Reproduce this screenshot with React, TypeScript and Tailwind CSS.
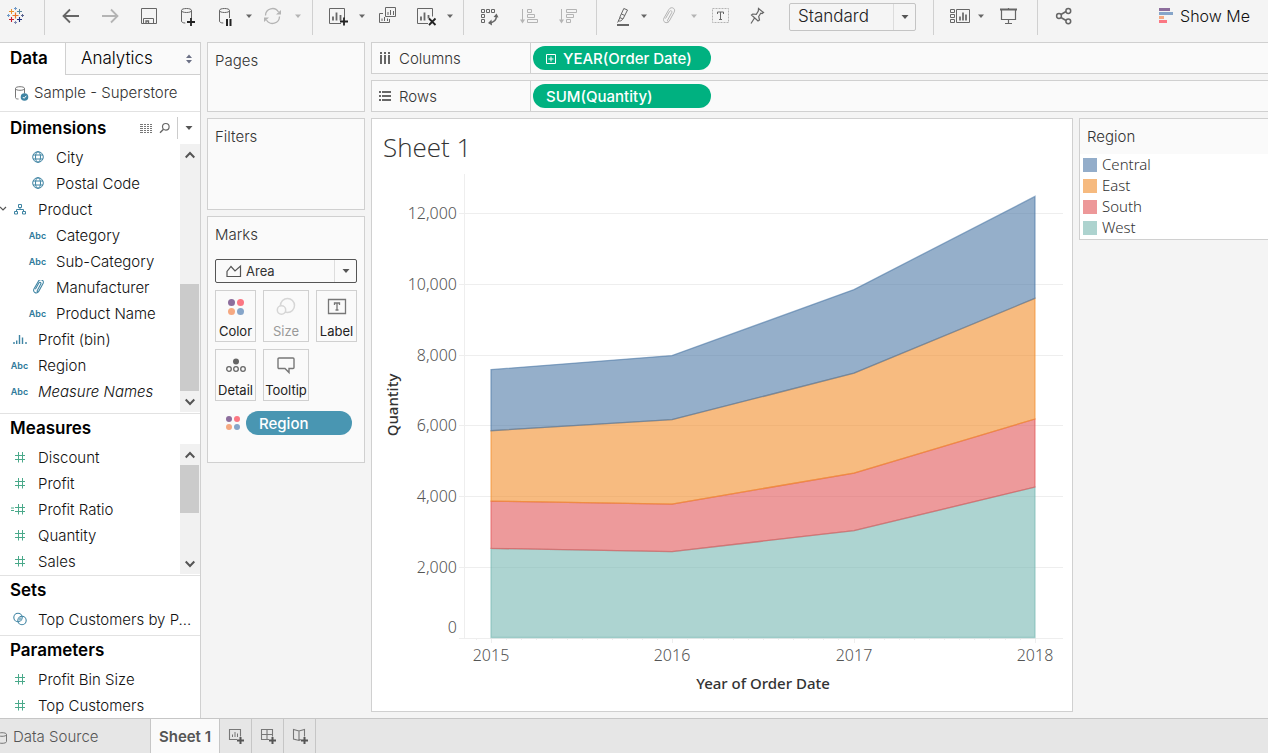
import type { ReactNode } from 'react';

/* ---------- shared pieces ---------- */

function Icon({ size = 20, className = '', children }: { size?: number; className?: string; children: ReactNode }) {
  return (
    <svg
      width={size}
      height={size}
      viewBox={`0 0 ${size} ${size}`}
      fill="none"
      stroke="currentColor"
      strokeWidth="1"
      className={`shrink-0 ${className}`}
      aria-hidden="true"
    >
      {children}
    </svg>
  );
}

function Caret({ className = '' }: { className?: string }) {
  return (
    <svg width="10" height="6" viewBox="0 0 10 6" className={`shrink-0 ${className}`} aria-hidden="true">
      <path d="M2 1.5h6L5 5z" fill="currentColor" />
    </svg>
  );
}

function BigCaret({ className = '' }: { className?: string }) {
  return (
    <svg width="10" height="6" viewBox="0 0 10 6" className={`shrink-0 ${className}`} aria-hidden="true">
      <path d="M1.5 1h7L5 5z" fill="currentColor" />
    </svg>
  );
}

function ToolButton({
  label,
  muted = false,
  className = '',
  children,
}: {
  label: string;
  muted?: boolean;
  className?: string;
  children: ReactNode;
}) {
  return (
    <button
      type="button"
      aria-label={label}
      title={label}
      className={`flex h-8 shrink-0 items-center ${muted ? 'text-[#b4b4b4]' : 'text-[#666666]'} ${className}`}
    >
      {children}
    </button>
  );
}

function Divider({ className = '' }: { className?: string }) {
  return <span className={`h-[35px] w-px shrink-0 self-start bg-[#d0d0d0] ${className}`} />;
}

/* ---------- toolbar icons ---------- */

function LogoIcon() {
  const cross = (x: number, y: number, r: number, color: string, w = 1) => (
    <path key={`${x}-${y}`} d={`M${x - r} ${y}h${2 * r}M${x} ${y - r}v${2 * r}`} stroke={color} strokeWidth={w} />
  );
  return (
    <Icon>
      {cross(9.5, 9.5, 3, '#e8762b', 1.2)}
      {cross(5.5, 5.5, 2.5, '#eb912c')}
      {cross(13.5, 5.5, 2.5, '#59879b')}
      {cross(5.5, 13.5, 2.5, '#c72035', 1.1)}
      {cross(13.5, 13.5, 2.5, '#1f2f7e', 1.1)}
      {cross(9.5, 2.5, 1.5, '#7099c6')}
      {cross(9.5, 16.5, 1.5, '#7c86b1')}
      {cross(2.5, 9.5, 1.5, '#7099c6')}
      {cross(16.5, 9.5, 1.5, '#5b6591')}
    </Icon>
  );
}

const BackIcon = () => (
  <Icon>
    <path d="M2.5 10H18M9 3.5L2.5 10 9 16.5" strokeWidth="1.8" />
  </Icon>
);

const ForwardIcon = () => (
  <Icon>
    <path d="M17.5 10H2M11 3.5l6.500 6.500-6.500 6.500" strokeWidth="1.8" />
  </Icon>
);

const SaveIcon = () => (
  <Icon>
    <path d="M2.5 2.5h15v15h-15z M4.5 17.5v-5h10v5" />
    <path d="M7 17.5v-2.500h2.500v2.500" strokeWidth="1.3" />
  </Icon>
);

const Cylinder = () => (
  <path d="M13.500 4.500v7.500M3.500 4.500v10.500c0 1.400 1.600 2 3.800 2M3.500 4.500c0-1.300 2.200-2 5-2s5 .7 5 2-2.200 2-5 2-5-.7-5-2z" />
);

const AddDataIcon = () => (
  <Icon>
    <Cylinder />
    <path d="M9 16h8M13 12v8" stroke="#222" strokeWidth="1.8" />
  </Icon>
);

const PauseDataIcon = () => (
  <Icon>
    <Cylinder />
    <path d="M11 13v7M14.500 13v7" stroke="#222" strokeWidth="2" />
  </Icon>
);

const RefreshIcon = () => (
  <Icon>
    <path d="M2.500 9.500A7 7 0 0 1 15.500 6M16.500 10.500A7 7 0 0 1 3.500 14" strokeWidth="1.300" />
    <path d="M18 4v4.500h-5zM1 16v-4.500h5z" fill="currentColor" stroke="none" />
  </Icon>
);

const NewSheetIcon = () => (
  <Icon>
    <path d="M12 17.500H.500v-15h15v10" />
    <path d="M4 14.500v-4M7.500 14.500v-8M11.500 14.500V9" strokeWidth="1.800" />
    <path d="M11 15.500h8M15 11.500v8" stroke="#222" strokeWidth="1.800" />
  </Icon>
);

const DuplicateIcon = () => (
  <Icon>
    <path d="M7.500 1.500h10v9h-10zM5 7.500H1.500v9h10V13" />
    <path d="M10 9V6M12.500 9V4M15.500 9V5M4 15v-2.500M6.500 15V11M9.500 15v-2.500" />
  </Icon>
);

const ClearIcon = () => (
  <Icon>
    <path d="M11 17.500H.500v-15h15v8" />
    <path d="M4 14.500v-4M7.500 14.500v-8M11.500 12.500V9" strokeWidth="1.800" />
    <path d="M12 12.500l6.500 6.500M18.500 12.500L12 19" stroke="#222" strokeWidth="1.800" />
  </Icon>
);

const SwapIcon = () => (
  <Icon>
    <path d="M1.500 3.500h3v3h-3zM6.500 3.500h3v3h-3zM11.500 3.500h3v3h-3zM1.500 8.500h3v3h-3zM1.500 13.500h3v3h-3z" />
    <path d="M16.500 9.500c0 4-2.500 7-7 7.500" strokeWidth="1.400" />
    <path d="M13.500 11l3-3.500 2 4zM11.500 13.500L8 17l4 2.500z" fill="currentColor" stroke="none" />
  </Icon>
);

const SortAscIcon = () => (
  <Icon>
    <path d="M3.500 3v13M8.500 3.500h4v3h-4zM8.500 8.500h7v3h-7zM8.500 13.500h10v3h-10z" />
    <path d="M1 13.500h5l-2.500 4z" fill="currentColor" stroke="none" />
  </Icon>
);

const SortDescIcon = () => (
  <Icon>
    <path d="M3.500 3v13M8.500 3.500h10v3h-10zM8.500 8.500h7v3h-7zM8.500 13.500h4v3h-4z" />
    <path d="M1 13.500h5l-2.500 4z" fill="currentColor" stroke="none" />
  </Icon>
);

const HighlightIcon = () => (
  <Icon>
    <path d="M10.800 2.500l3.700 1.500-4.500 9-3.300-1.500zM7 11.500l-1.700 3.500 2.500 0 2-2M5.500 15l-1 1.500M8.500 8l3.300 1.500" />
    <path d="M4 19h12" strokeWidth="2" />
  </Icon>
);

const ClipShape = () => (
  <path d="M6.500 12.500l4-7c1-1.600 3-.6 2.200 1.200l-4 7.300c-.8 1.400 .8 2.200 1.600 1l4.800-8.700c2.200-4-3.200-6.500-5.300-2.700l-4.800 8.400c-2 4 2.700 6.300 5.200 3.300" />
);

const ClipIcon = () => (
  <Icon>
    <ClipShape />
  </Icon>
);

const TextMarkIcon = () => (
  <Icon>
    <path d="M1.500 2.500h16v14h-16z" strokeDasharray="2 1" />
    <path d="M6.500 8V6h6v2M9.500 6v8M8 13.500h3" stroke="#666" />
  </Icon>
);

const PinIcon = () => (
  <Icon>
    <path
      d="M11.500 2.500l5 4-1.500 1-1.200-.3-2.100 3.300.8 3.500-1.500 1L4.500 9l1.200-1 3.600.3 2-3.300z M7.500 12L4 17.500"
      strokeWidth="1.200"
    />
  </Icon>
);

const CardsIcon = () => (
  <Icon>
    <path d="M.5 3.500h4v3h-4zM.5 8.500h4v3h-4zM.5 13.500h4v3h-4zM6.500 3.500h13v13h-13z" />
    <path d="M10 14.500v-4M13 14.500v-8M16 14.500v-6" strokeWidth="1.700" />
  </Icon>
);

const PresentIcon = () => (
  <Icon>
    <path d="M2 3.500h17" strokeWidth="2" />
    <path d="M3.500 4v9.500h14V4M10.500 13.500v4M7 17.500h7M10.500 2v1" strokeWidth="1.200" />
  </Icon>
);

const ShareIcon = () => (
  <Icon>
    <path d="M7 8.500l5-3M7 11.500l5 3" strokeWidth="1.500" />
    <g strokeWidth="1.500">
      <circle cx="5" cy="10" r="2.400" />
      <circle cx="14.300" cy="5" r="2.400" />
      <circle cx="14.300" cy="15.300" r="2.400" />
    </g>
  </Icon>
);

/* ---------- toolbar ---------- */

function Toolbar() {
  return (
    <header className="flex h-[42px] items-center overflow-hidden pb-[10px] pl-1.5">
      <ToolButton label="Start page">
        <LogoIcon />
      </ToolButton>
      <Divider className="ml-[18px] mr-4" />
      <div className="flex gap-[19px]">
        <ToolButton label="Undo">
          <BackIcon />
        </ToolButton>
        <ToolButton label="Redo" muted>
          <ForwardIcon />
        </ToolButton>
        <ToolButton label="Save">
          <SaveIcon />
        </ToolButton>
        <ToolButton label="New data source">
          <AddDataIcon />
        </ToolButton>
      </div>
      <div className="ml-[18px] flex gap-[9px]">
        <ToolButton label="Pause auto updates" className="gap-2">
          <PauseDataIcon />
          <Caret />
        </ToolButton>
        <ToolButton label="Run update" muted className="gap-2.5">
          <RefreshIcon />
          <Caret />
        </ToolButton>
      </div>
      <Divider className="ml-[9px] mr-4" />
      <div className="flex gap-[11px]">
        <ToolButton label="New worksheet" className="gap-2">
          <NewSheetIcon />
          <Caret />
        </ToolButton>
        <ToolButton label="Duplicate">
          <DuplicateIcon />
        </ToolButton>
        <ToolButton label="Clear sheet" className="ml-2 gap-2">
          <ClearIcon />
          <Caret />
        </ToolButton>
      </div>
      <Divider className="ml-2 mr-4" />
      <div className="flex gap-[19px]">
        <ToolButton label="Swap rows and columns">
          <SwapIcon />
        </ToolButton>
        <ToolButton label="Sort ascending" muted>
          <SortAscIcon />
        </ToolButton>
        <ToolButton label="Sort descending" muted>
          <SortDescIcon />
        </ToolButton>
      </div>
      <Divider className="ml-[18px] mr-4" />
      <div className="flex gap-2.5">
        <ToolButton label="Highlight" className="gap-1.5">
          <HighlightIcon />
          <Caret />
        </ToolButton>
        <ToolButton label="Group members" muted className="gap-2.5">
          <ClipIcon />
          <Caret />
        </ToolButton>
      </div>
      <div className="ml-3 flex gap-4">
        <ToolButton label="Show mark labels" muted>
          <TextMarkIcon />
        </ToolButton>
        <ToolButton label="Fix axes">
          <PinIcon />
        </ToolButton>
      </div>
      <div className="relative ml-[22px] mt-0.5 h-7 w-[127px] shrink-0">
        <select
          aria-label="Fit"
          className="h-7 w-full appearance-none rounded-[2px] border border-[#c4c4c4] bg-[#f5f5f5] pl-2 text-[17px] font-light text-[#222]"
        >
          <option>Standard</option>
          <option>Fit Width</option>
          <option>Fit Height</option>
          <option>Entire View</option>
        </select>
        <span className="pointer-events-none absolute inset-y-px right-px flex w-[22px] items-center justify-center border-l border-[#dcdcdc] text-[#555]">
          <BigCaret />
        </span>
      </div>
      <Divider className="ml-[17px] mr-4" />
      <ToolButton label="Show or hide cards" className="gap-1.5">
        <CardsIcon />
        <Caret />
      </ToolButton>
      <ToolButton label="Presentation mode" className="ml-3">
        <PresentIcon />
      </ToolButton>
      <Divider className="ml-[19px] mr-4" />
      <ToolButton label="Share">
        <ShareIcon />
      </ToolButton>
      <button type="button" className="ml-auto mr-[18px] flex shrink-0 items-center gap-1.5 text-base text-[#111] font-light">
        <svg width="15" height="16" viewBox="0 0 15 16" aria-hidden="true">
          <path fill="#8c6d9c" d="M0 0h11v3H0z" />
          <path fill="#86a5c9" d="M0 4h14v3H0z" />
          <path fill="#f5a881" d="M0 8h5v3H0z" />
          <path fill="#fb7783" d="M0 12h8v3H0z" />
        </svg>
        Show Me
      </button>
    </header>
  );
}

/* ---------- data pane ---------- */

type FieldKind = 'geo' | 'hierarchy' | 'abc' | 'clip' | 'bin' | 'number' | 'calc' | 'set';

interface Field {
  name: string;
  kind: FieldKind;
  nested?: boolean;
  open?: boolean;
  italic?: boolean;
}

const dimensions: Field[] = [
  { name: 'City', kind: 'geo', nested: true },
  { name: 'Postal Code', kind: 'geo', nested: true },
  { name: 'Product', kind: 'hierarchy', open: true },
  { name: 'Category', kind: 'abc', nested: true },
  { name: 'Sub-Category', kind: 'abc', nested: true },
  { name: 'Manufacturer', kind: 'clip', nested: true },
  { name: 'Product Name', kind: 'abc', nested: true },
  { name: 'Profit (bin)', kind: 'bin' },
  { name: 'Region', kind: 'abc' },
  { name: 'Measure Names', kind: 'abc', italic: true },
];

const measures: Field[] = [
  { name: 'Discount', kind: 'number' },
  { name: 'Profit', kind: 'number' },
  { name: 'Profit Ratio', kind: 'calc' },
  { name: 'Quantity', kind: 'number' },
  { name: 'Sales', kind: 'number' },
];

const sets: Field[] = [{ name: 'Top Customers by P...', kind: 'set' }];

const parameters: Field[] = [
  { name: 'Profit Bin Size', kind: 'number' },
  { name: 'Top Customers', kind: 'number' },
];

function FieldIcon({ kind }: { kind: FieldKind }) {
  switch (kind) {
    case 'abc':
      return <span className="pt-0.5 text-[9px] font-semibold text-[#2f7a9b]">Abc</span>;
    case 'geo':
      return (
        <Icon size={12} className="text-[#3f84a3]">
          <circle cx="6" cy="6" r="5.300" />
          <ellipse cx="6" cy="6" rx="2.500" ry="5.300" />
          <path d="M1 4h10M1 8h10" />
        </Icon>
      );
    case 'hierarchy':
      return (
        <Icon size={12} className="text-[#3f84a3]">
          <path d="M4.500 1.500h3v3h-3zM.500 8.500h3v2.500h-3zM8.500 8.500h3v2.500h-3zM6 4.500v2M2.500 8.500V6.500h7v2" />
        </Icon>
      );
    case 'clip':
      return (
        <svg width="14" height="14" viewBox="2 2 15 16" fill="none" stroke="#3f84a3" strokeWidth="1.200" aria-hidden="true">
          <ClipShape />
        </svg>
      );
    case 'bin':
      return (
        <Icon size={14} className="text-[#3f84a3]">
          <path d="M1 12v-2M3.700 12V8.500M6.500 12V3M9.500 12V5.500M13 12v-2" strokeWidth="1.400" />
        </Icon>
      );
    case 'set':
      return (
        <Icon size={14} className="text-[#3f84a3]">
          <circle cx="5" cy="5.500" r="4.200" strokeWidth="1.100" />
          <circle cx="9" cy="8.500" r="4.200" strokeWidth="1.100" />
          <circle cx="7" cy="7" r="1.700" fill="#8fb8ca" stroke="none" />
        </Icon>
      );
    default:
      return (
        <svg width="18" height="12" viewBox="0 0 18 12" fill="none" stroke="#4aa98a" aria-hidden="true">
          {kind === 'calc' && <path d="M0 5h3M0 7.500h3" />}
          <path d="M4 4.500h10M4 8.500h10M7.500 1v10.500M11.500 1v10.500" />
        </svg>
      );
  }
}

function FieldList({ fields }: { fields: Field[] }) {
  return (
    <ul className="min-w-0 flex-1">
      {fields.map((f) => (
        <li key={f.name} className={`flex h-[26px] items-center ${f.nested ? 'pl-[18px]' : ''}`}>
          <span className="flex w-2 shrink-0">
            {f.open && (
              <svg width="7" height="6" viewBox="0 0 7 6" fill="none" stroke="#555" strokeWidth="1.200" aria-hidden="true">
                <path d="M0 1l3 3 3-3" />
              </svg>
            )}
          </span>
          <span className="mr-[7px] flex w-[23px] shrink-0 items-center justify-center">
            <FieldIcon kind={f.kind} />
          </span>
          <button type="button" className={`whitespace-nowrap pt-0.5 font-light ${f.italic ? 'italic' : ''}`}>
            {f.name}
          </button>
        </li>
      ))}
    </ul>
  );
}

function Scroller({ thumb }: { thumb: string }) {
  return (
    <div className="flex w-5 shrink-0 flex-col bg-[#f1f1f1] pr-px text-[#555]">
      <button type="button" aria-label="Scroll up" className="flex h-[21px] items-center justify-center">
        <Icon size={10}>
          <path d="M.700 7.500L5 3l4.300 4.500" strokeWidth="2" />
        </Icon>
      </button>
      <div className={`bg-[#cbcbcb] ${thumb}`} />
      <button type="button" aria-label="Scroll down" className="mt-auto flex h-[21px] items-center justify-center">
        <Icon size={10}>
          <path d="M.700 2.500L5 7l4.300-4.500" strokeWidth="2" />
        </Icon>
      </button>
    </div>
  );
}

function DataPane() {
  const heading = 'flex h-[30px] items-center pl-2.5 text-[17px] font-semibold text-black';
  return (
    <aside className="w-[201px] shrink-0 border-r border-t border-[#d0d0d0] bg-white text-[15px] text-[#111]">
      <div className="flex h-8" role="tablist">
        <button type="button" role="tab" aria-selected="true" className="w-[65px] pl-2.5 text-left text-[17px] font-semibold text-black">
          Data
        </button>
        <button
          type="button"
          role="tab"
          aria-selected="false"
          className="flex flex-1 items-center justify-between border-b border-l border-[#d0d0d0] bg-[#fafafa] pl-[15px] pr-[7px] text-[17px] font-light text-black"
        >
          Analytics
          <svg width="8" height="10" viewBox="0 0 8 10" fill="#6b7085" aria-hidden="true">
            <path d="M4 .500L7 4H1zM4 9.500L7 6H1z" />
          </svg>
        </button>
      </div>
      <button type="button" className="flex h-[37px] w-full items-center gap-1 border-b border-[#e2e2e2] pl-3 font-light text-[#333]">
        <Icon size={18} className="text-[#777]">
          <path d="M12.500 4.500v5M3.500 4.500v9c0 1.200 1.400 1.500 3 1.500M3.500 4.500c0-1.200 2-1.800 4.500-1.800s4.500.6 4.500 1.800-2 1.800-4.500 1.800-4.500-.6-4.500-1.800z" />
          <circle cx="12.500" cy="13" r="3.800" fill="#3f84a3" stroke="none" />
          <path d="M10.800 13l1.300 1.300 2.200-2.500" stroke="#fff" />
        </Icon>
        Sample - Superstore
      </button>

      <section>
        <div className="flex h-8 items-center pl-2.5">
          <h2 className="flex-1 pt-0.5 text-[17px] font-semibold text-black">Dimensions</h2>
          <button type="button" aria-label="View as list" className="text-[#777]">
            <svg width="12" height="11" viewBox="0 0 12 11" fill="none" stroke="currentColor" aria-hidden="true">
              <path d="M0 1.500h3m1 0h2m1 0h2m1 0h2M0 3.500h3m1 0h2m1 0h2m1 0h2M0 5.500h3m1 0h2m1 0h2m1 0h2M0 7.500h3m1 0h2m1 0h2m1 0h2M0 9.500h3m1 0h2m1 0h2m1 0h2" />
            </svg>
          </button>
          <button type="button" aria-label="Find field" className="ml-1.5 text-[#666]">
            <Icon size={13}>
              <circle cx="7.800" cy="4.800" r="3.300" strokeWidth="1.200" />
              <path d="M5.500 7.200L2 10.700" strokeWidth="1.500" />
            </Icon>
          </button>
          <button type="button" aria-label="Pane menu" className="ml-1.5 flex h-[22px] w-[23px] items-center justify-center border-l border-[#ccc] text-[#555]">
            <BigCaret />
          </button>
        </div>
        <div className="mb-px flex h-[268px]">
          <FieldList fields={dimensions} />
          <Scroller thumb="mt-[119px] h-[107px]" />
        </div>
      </section>
      <section className="border-t border-[#e2e2e2]">
        <h2 className={heading}>Measures</h2>
        <div className="mb-px flex">
          <FieldList fields={measures} />
          <Scroller thumb="h-12" />
        </div>
      </section>
      <section className="border-t border-[#e2e2e2] pb-[3px]">
        <h2 className={heading}>Sets</h2>
        <FieldList fields={sets} />
      </section>
      <section className="border-t border-[#e2e2e2]">
        <h2 className={heading}>Parameters</h2>
        <FieldList fields={parameters} />
      </section>
    </aside>
  );
}

/* ---------- cards ---------- */

function ColorDots({ r = 3.5 }: { r?: number }) {
  const a = 8 - r - 1;
  const b = 8 + r + 1;
  return (
    <svg width="16" height="16" viewBox="0 0 16 16" aria-hidden="true">
      <circle cx={a} cy={a} r={r} fill="#8c6d9c" />
      <circle cx={b} cy={a} r={r} fill="#fb7783" />
      <circle cx={a} cy={b} r={r} fill="#f5a881" />
      <circle cx={b} cy={b} r={r} fill="#86a5c9" />
    </svg>
  );
}

function MarkButton({ label, muted = false, children }: { label: string; muted?: boolean; children: ReactNode }) {
  return (
    <button
      type="button"
      className={`flex h-[52px] flex-col items-center justify-between border border-[#d0d0d0] pt-1.5 text-[13px] ${
        muted ? 'text-[#999]' : 'text-[#222]'
      }`}
    >
      <span className="flex h-5 items-center">{children}</span>
      {label}
    </button>
  );
}

function Cards() {
  const card = 'border border-[#d0d0d0] bg-[#fafafa] px-[7px] text-[15px] text-[#333]';
  const title = 'flex h-[35px] items-center pt-0.5 font-light';
  return (
    <div className="flex w-[158px] shrink-0 flex-col gap-1.5">
      <section className={`${card} h-[70px]`}>
        <h2 className={title}>Pages</h2>
      </section>
      <section className={`${card} h-[92px]`}>
        <h2 className={title}>Filters</h2>
      </section>
      <section className={`${card} h-[247px]`}>
        <h2 className={title}>Marks</h2>
        <div className="relative mt-[7px]">
          <select
            aria-label="Mark type"
            className="h-6 w-full appearance-none rounded-[2px] border border-[#555] bg-[#fafafa] pl-[30px] pt-0.5 text-[13px] text-[#333]"
          >
            <option>Area</option>
            <option>Bar</option>
            <option>Line</option>
          </select>
          <span className="pointer-events-none absolute inset-y-0 left-2.5 flex items-center">
            <svg width="18" height="14" viewBox="0 0 18 14" fill="none" stroke="#555" aria-hidden="true">
              <path d="M2 12.500V7.500l4-5 4 4.500 5.500-5v10.500z" strokeWidth="1.200" />
            </svg>
          </span>
          <span className="pointer-events-none absolute inset-y-px right-px flex w-[22px] items-center justify-center border-l border-[#ddd] text-[#555]">
            <BigCaret />
          </span>
        </div>
        <div className="mt-[7px] grid grid-cols-[41px_46px_41px] gap-[7px]">
          <MarkButton label="Color">
            <ColorDots />
          </MarkButton>
          <MarkButton label="Size" muted>
            <Icon>
              <g stroke="#d6d6d6" strokeWidth="1.500">
                <circle cx="11.500" cy="8.500" r="7" />
                <circle cx="5.500" cy="13" r="4.200" fill="#fafafa" />
              </g>
            </Icon>
          </MarkButton>
          <MarkButton label="Label">
            <Icon className="text-[#777]">
              <path d="M1.500 2.500h17v14h-17z" strokeWidth="1.300" />
              <path d="M7.500 8V6h5v2M10 6v7.500M8.500 13h3" strokeWidth="1.300" />
            </Icon>
          </MarkButton>
          <MarkButton label="Detail">
            <Icon className="text-[#666]">
              <circle cx="10" cy="5.500" r="3" fill="currentColor" stroke="none" />
              <g strokeWidth="1.300">
                <circle cx="3" cy="13" r="2.300" />
                <circle cx="10" cy="13" r="2.300" />
                <circle cx="17" cy="13" r="2.300" />
              </g>
            </Icon>
          </MarkButton>
          <MarkButton label="Tooltip">
            <Icon className="text-[#777]">
              <path d="M3 2h14a1 1 0 0 1 1 1v8.500a1 1 0 0 1-1 1h-4v4l-4-4H3a1 1 0 0 1-1-1V3a1 1 0 0 1 1-1z" strokeWidth="1.400" />
            </Icon>
          </MarkButton>
        </div>
        <div className="mt-2.5 flex items-center pl-2.5">
          <ColorDots r={3} />
          <button type="button" className="ml-[5px] h-6 w-[106px] rounded-full bg-[#4996b2] pl-[13px] pt-0.5 text-left font-medium text-white">
            Region
          </button>
        </div>
      </section>
    </div>
  );
}

/* ---------- shelves ---------- */

function Shelf({ name, icon, children }: { name: string; icon: ReactNode; children: ReactNode }) {
  return (
    <div className="flex h-8 items-center border-y border-l border-[#d0d0d0] bg-[#fafafa] text-[15px]">
      <span className="flex h-full w-[159px] items-center gap-2 border-r border-[#d0d0d0] pl-[7px] font-light text-[#333]">
        {icon}
        <span className="pt-0.5">{name}</span>
      </span>
      {children}
    </div>
  );
}

function GreenPill({ children }: { children: ReactNode }) {
  return (
    <button
      type="button"
      className="ml-0.5 flex h-6 w-[178px] items-center gap-[7px] rounded-full bg-[#00b180] pl-[13px] pt-0.5 font-medium text-white"
    >
      {children}
    </button>
  );
}

/* ---------- chart ---------- */

const regions = [
  { name: 'West', color: '#76b7b2', swatch: 'bg-[#add3cf]', top: [2534, 2443, 3037, 4266] },
  { name: 'South', color: '#e15759', swatch: 'bg-[#ed9899]', top: [3870, 3785, 4661, 6192] },
  { name: 'East', color: '#f28e2b', swatch: 'bg-[#f6ba7f]', top: [5862, 6172, 7486, 9605] },
  { name: 'Central', color: '#4e79a7', swatch: 'bg-[#93adca]', top: [7588, 7985, 9850, 12486] },
];

const years = [2015, 2016, 2017, 2018];
const xs = [119, 300, 482, 663];
const baseY = 465.5;
const yOf = (v: number) => baseY - v * 0.03537;

function AreaChart() {
  const ticks = [2000, 4000, 6000, 8000, 10000, 12000];
  return (
    <svg
      viewBox="0 0 700 539"
      className="block h-auto w-full font-['Noto_Sans',sans-serif]"
      role="img"
      aria-label="Quantity by year of order date, stacked by region"
    >
      <g stroke="#eeeeee" fill="none">
        {ticks.map((t) => (
          <path key={t} d={`M87 ${Math.round(yOf(t)) + 0.5}H691`} />
        ))}
        <path d="M92.500 2V466M87 466.500H691" />
        {xs.map((x) => (
          <path key={x} d={`M${x + 0.5} 466v5`} />
        ))}
        {Array.from({ length: 38 }, (_, i) => (
          <path key={i} d={`M${Math.round(104 + i * 15.1) + 0.5} 466v2`} />
        ))}
      </g>
      {regions.map((r, i) => {
        const lower = i === 0 ? [0, 0, 0, 0] : regions[i - 1].top;
        const upperPts = xs.map((x, k) => `${x},${(yOf(r.top[k]) + 0.5).toFixed(1)}`);
        const lowerPts = xs.map((x, k) => `${x},${(yOf(lower[k]) + (i === 0 ? 0 : 0.5)).toFixed(1)}`).reverse();
        return (
          <g key={r.name}>
            <polygon points={[...upperPts, ...lowerPts].join(' ')} fill={r.color} fillOpacity="0.6" />
            <polygon
              points={[...upperPts, ...lowerPts].join(' ')}
              fill="none"
              stroke={r.color}
              strokeOpacity="0.6"
              strokeWidth="1.300"
            />
          </g>
        );
      })}
      <g fontSize="16" fontWeight="300" fill="#555">
        <g textAnchor="end">
          {ticks.map((t) => (
            <text key={t} x="85" y={Math.round(yOf(t)) + 6}>
              {t.toLocaleString('en-US')}
            </text>
          ))}
          <text x="85" y="461">
            0
          </text>
        </g>
        <g textAnchor="middle">
          {years.map((y, k) => (
            <text key={y} x={xs[k]} y="489">
              {y}
            </text>
          ))}
        </g>
      </g>
      <g fontSize="15" fontWeight="500" fill="#333" textAnchor="middle">
        <text x="391" y="517">
          Year of Order Date
        </text>
        <text transform="translate(26 233) rotate(-90)">Quantity</text>
      </g>
    </svg>
  );
}

/* ---------- bottom tabs ---------- */

const plus = <path d="M10 13.500h7M13.500 10v7" stroke="#555" strokeWidth="2" />;

function SheetTabs() {
  const add = 'flex w-8 items-center justify-center border-r border-[#c6c6c6] text-[#777]';
  return (
    <footer className="flex h-[35px] border-t border-[#c6c6c6] bg-[#e6e6e6] text-[15px]">
      <button type="button" className="flex w-[150px] items-center gap-1.5 pt-[3px] font-light text-[#555]">
        <svg width="7" height="12" viewBox="3 0 7 12" fill="none" stroke="#777" aria-hidden="true">
          <path d="M.500 2.500C.500 1.300 2.500.700 5 .700s4.500.600 4.500 1.800v7c0 1.200-2 1.800-4.500 1.800S.500 10.700.500 9.500zM.500 2.500c0 1.200 2 1.800 4.500 1.800s4.500-.600 4.500-1.800" />
        </svg>
        Data Source
      </button>
      <button type="button" className="w-[70px] border-x border-[#c6c6c6] bg-[#fafafa] pt-[3px] font-semibold text-[#555]">
        Sheet 1
      </button>
      <button type="button" aria-label="New worksheet" className={add}>
        <Icon size={18}>
          <path d="M10 12.500H2.500v-10h11V9.500" strokeWidth="1.100" />
          <path d="M5.500 10V7.500M8 10V5M10.500 10V6.500" />
          {plus}
        </Icon>
      </button>
      <button type="button" aria-label="New dashboard" className={add}>
        <Icon size={18}>
          <path d="M10 12.500H2.500v-10h11V9.500M8 2.500v10M2.500 7.500h11" strokeWidth="1.100" />
          {plus}
        </Icon>
      </button>
      <button type="button" aria-label="New story" className={add}>
        <Icon size={18}>
          <path d="M10 12.500L8 13.500l-5.500-1.500V2.500L8 4l5.500-1.500v7M8 4v9.500" strokeWidth="1.100" />
          {plus}
        </Icon>
      </button>
    </footer>
  );
}

/* ---------- page ---------- */

export default function App() {
  return (
    <div className="flex min-h-screen flex-col overflow-hidden bg-[#f4f4f4] font-['Inter',sans-serif]">
      <Toolbar />
      <div className="flex flex-1">
        <DataPane />
        <div className="flex min-w-0 flex-1 gap-1.5 pb-1.5 pl-1.5">
          <Cards />
          <main className="flex min-w-0 flex-1 flex-col gap-1.5">
            <Shelf
              name="Columns"
              icon={
                <svg width="12" height="12" viewBox="0 0 12 12" fill="#666" aria-hidden="true">
                  <path d="M1 0h2v2H1zM5 0h2v2H5zM9 0h2v2H9zM1 3h2v9H1zM5 3h2v9H5zM9 3h2v9H9z" />
                </svg>
              }
            >
              <GreenPill>
                <Icon size={10}>
                  <path d="M.500.500h9v9h-9zM2.500 5h5M5 2.500v5" />
                </Icon>
                YEAR(Order Date)
              </GreenPill>
            </Shelf>
            <Shelf
              name="Rows"
              icon={
                <svg width="12" height="12" viewBox="0 0 12 12" fill="#666" aria-hidden="true">
                  <path d="M0 1h2v2H0zM0 5h2v2H0zM0 9h2v2H0zM3 1h9v2H3zM3 5h9v2H3zM3 9h9v2H3z" />
                </svg>
              }
            >
              <GreenPill>SUM(Quantity)</GreenPill>
            </Shelf>
            <div className="flex flex-1 gap-1.5">
              <section className="min-w-0 flex-1 border border-[#d0d0d0] bg-white">
                <h1 className="h-[53px] pl-[11px] pt-2 font-['Open_Sans',sans-serif] text-[26px] font-light leading-[40px] text-[#333]">
                  Sheet 1
                </h1>
                <AreaChart />
              </section>
              <section className="w-[189px] shrink-0 self-start border-y border-l border-[#d0d0d0] bg-white pb-px text-[15px] text-[#333]">
                <h2 className="flex h-[35px] items-center bg-[#fafafa] pl-[7px] pt-0.5 font-light">Region</h2>
                <ul className="font-['Noto_Sans',sans-serif] font-light">
                  {[...regions].reverse().map((r) => (
                    <li key={r.name} className="flex h-[21px] items-center gap-[5px] pl-[3px]">
                      <span className={`size-3.5 ${r.swatch}`} />
                      {r.name}
                    </li>
                  ))}
                </ul>
              </section>
            </div>
          </main>
        </div>
      </div>
      <SheetTabs />
    </div>
  );
}
